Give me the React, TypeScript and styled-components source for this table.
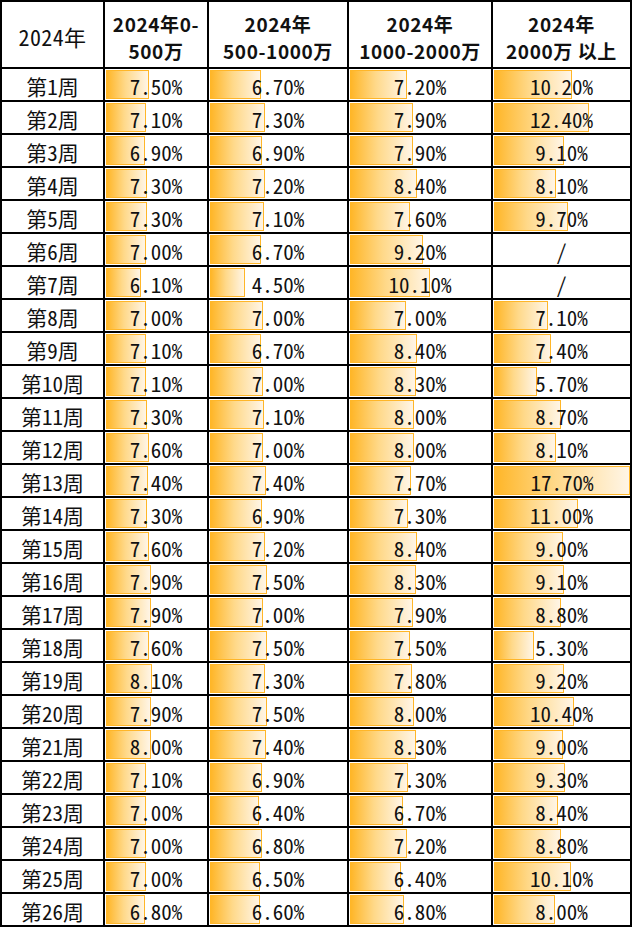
import React from "react";
import styled, { createGlobalStyle } from "styled-components";

const GlobalStyle = createGlobalStyle`
  html, body {
    margin: 0;
    padding: 0;
    background: #fff;
  }
  body {
    font-family: "Noto Sans CJK SC", "Noto Sans", sans-serif;
    color: #111;
  }
`;

const Sheet = styled.div`
  display: grid;
  grid-template-columns: 101px 102px 138px 142px 137px;
  grid-template-rows: 65px repeat(26, 31px);
  gap: 2px;
  padding: 2px;
  width: 632px;
  box-sizing: border-box;
  background: #000;
`;

const HeadCell = styled.div<{ $bold?: boolean }>`
  background: #fff;
  display: flex;
  flex-direction: column;
  align-items: center;
  justify-content: center;
  padding-top: 4px;
  box-sizing: border-box;
  font-size: ${(p) => (p.$bold ? "19px" : "22px")};
  font-weight: ${(p) => (p.$bold ? 700 : 400)};
  letter-spacing: ${(p) => (p.$bold ? "0.6px" : "0.4px")};
  line-height: 27px;
  white-space: pre;
  font-feature-settings: ${(p) => (p.$bold ? "normal" : `"hwid" 1`)};
`;

const WeekCell = styled.div`
  background: #fff;
  display: flex;
  align-items: center;
  justify-content: center;
  padding-top: 3px;
  box-sizing: border-box;
  font-size: 21px;
  line-height: 1;
  font-feature-settings: "hwid" 1;
`;

const DataCell = styled.div`
  background: #fff;
  display: grid;
  padding: 1px;
  box-sizing: border-box;
`;

const Bar = styled.div`
  grid-area: 1 / 1;
  justify-self: start;
  height: 100%;
  box-sizing: border-box;
  border: 1px solid #ffb628;
  background: linear-gradient(to right, #ffb628 0%, #ffd98a 45%, #fff5e6 100%);
`;

const Value = styled.span`
  grid-area: 1 / 1;
  justify-self: center;
  align-self: center;
  padding-top: 3px;
  font-size: 21px;
  line-height: 1;
  font-feature-settings: "hwid" 1;
  position: relative;
`;

const headers: { lines: string[]; bold: boolean }[] = [
  { lines: ["2024年"], bold: false },
  { lines: ["2024年0-", "500万"], bold: true },
  { lines: ["2024年", "500-1000万"], bold: true },
  { lines: ["2024年", "1000-2000万"], bold: true },
  { lines: ["2024年", "2000万 以上"], bold: true },
];

// bar width = base + slope * value, measured per column
const scales = [
  { base: 2.4, slope: 5.35 },
  { base: 2.1, slope: 7.3 },
  { base: 0.3, slope: 7.9 },
  { base: -0.4, slope: 7.7 },
];

const data: (number | null)[][] = [
  [7.5, 6.7, 7.2, 10.2],
  [7.1, 7.3, 7.9, 12.4],
  [6.9, 6.9, 7.9, 9.1],
  [7.3, 7.2, 8.4, 8.1],
  [7.3, 7.1, 7.6, 9.7],
  [7.0, 6.7, 9.2, null],
  [6.1, 4.5, 10.1, null],
  [7.0, 7.0, 7.0, 7.1],
  [7.1, 6.7, 8.4, 7.4],
  [7.1, 7.0, 8.3, 5.7],
  [7.3, 7.1, 8.0, 8.7],
  [7.6, 7.0, 8.0, 8.1],
  [7.4, 7.4, 7.7, 17.7],
  [7.3, 6.9, 7.3, 11.0],
  [7.6, 7.2, 8.4, 9.0],
  [7.9, 7.5, 8.3, 9.1],
  [7.9, 7.0, 7.9, 8.8],
  [7.6, 7.5, 7.5, 5.3],
  [8.1, 7.3, 7.8, 9.2],
  [7.9, 7.5, 8.0, 10.4],
  [8.0, 7.4, 8.3, 9.0],
  [7.1, 6.9, 7.3, 9.3],
  [7.0, 6.4, 6.7, 8.4],
  [7.0, 6.8, 7.2, 8.8],
  [7.0, 6.5, 6.4, 10.1],
  [6.8, 6.6, 6.8, 8.0],
];

export default function App() {
  return (
    <>
      <GlobalStyle />
      <Sheet>
        {headers.map((h, i) => (
          <HeadCell key={i} $bold={h.bold}>
            {h.lines.map((l) => (
              <div key={l}>{l}</div>
            ))}
          </HeadCell>
        ))}
        {data.map((row, r) => (
          <React.Fragment key={r}>
            <WeekCell>第{r + 1}周</WeekCell>
            {row.map((v, c) => (
              <DataCell key={c}>
                {v !== null && (
                  <Bar
                    style={{
                      width: `${scales[c].base + scales[c].slope * v}px`,
                    }}
                  />
                )}
                <Value>{v === null ? "/" : `${v.toFixed(2)}%`}</Value>
              </DataCell>
            ))}
          </React.Fragment>
        ))}
      </Sheet>
    </>
  );
}
